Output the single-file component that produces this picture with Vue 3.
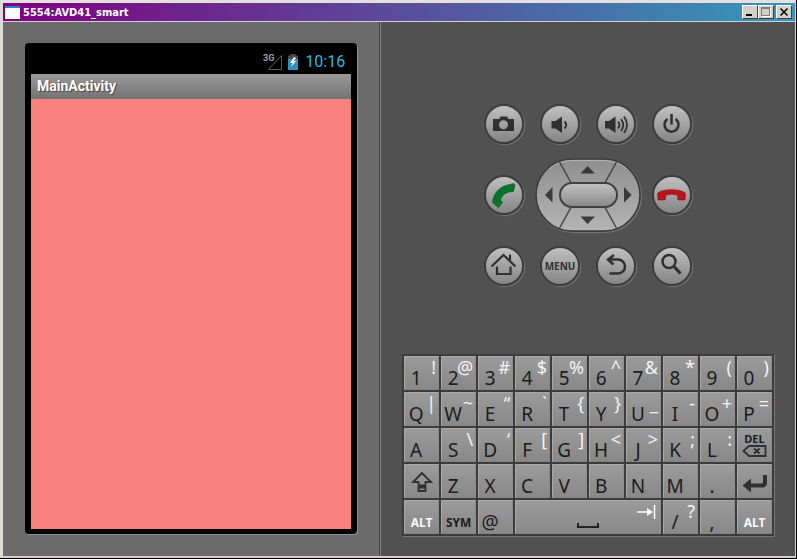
<script setup>
const rows = [
  [['1', '!'], ['2', '@'], ['3', '#'], ['4', '$'], ['5', '%'], ['6', '^'], ['7', '&'], ['8', '*'], ['9', '('], ['0', ')']],
  [['Q', '|'], ['W', '~'], ['E', '“'], ['R', '`'], ['T', '{'], ['Y', '}'], ['U', '_'], ['I', '-'], ['O', '+'], ['P', '=']],
  [['A'], ['S', '\\'], ['D', '‘'], ['F', '['], ['G', ']'], ['H', '<'], ['J', '>'], ['K', ';'], ['L', ':'], ['DEL']],
  [['Shift'], ['Z'], ['X'], ['C'], ['V'], ['B'], ['N'], ['M'], ['.'], ['Enter']],
  [['ALT'], ['SYM'], ['@'], ['Space'], ['/', '?'], [','], ['ALT']]
]
const special = ['DEL', 'Shift', 'Enter', 'Space', 'ALT', 'SYM']
const keys = rows.flat().map(([main, alt], id) => ({ id, main, alt, plain: !special.includes(main) }))
</script>

<template>
  <div class="window">
    <header class="titlebar">
      <svg class="app-icon" viewBox="0 0 15 13" aria-hidden="true">
        <rect width="15" height="13" fill="#fff" />
        <rect width="15" height="2" fill="#2b7fd0" />
      </svg>
      <h1 class="title">5554:AVD41_smart</h1>
      <div class="window-buttons">
        <button class="win-btn" aria-label="Minimize">
          <svg viewBox="0 0 12 10"><path d="M2 7h6v2H2z" /></svg>
        </button>
        <button class="win-btn" aria-label="Maximize" disabled>
          <svg viewBox="0 0 12 10">
            <path d="M2 1h9v9H2z" fill="#fff" />
            <path d="M1 0h9v9H1zM2 2v6h7V2z" fill="#808080" fill-rule="evenodd" />
            <path d="M2 2h7v6H2z" fill="#d4d0c8" />
          </svg>
        </button>
        <button class="win-btn close" aria-label="Close">
          <svg viewBox="0 0 12 10"><path d="M2.500 1.500L9.500 8.500M9.500 1.500L2.500 8.500" stroke="#000" stroke-width="1.500" /></svg>
        </button>
      </div>
    </header>

    <main class="content">
      <section class="device-pane">
        <div class="device">
          <div class="status">
            <svg class="signal" viewBox="0 0 20 18" aria-hidden="true">
              <path d="M18.500 2.500v14H5.500z" fill="none" stroke="#5c5c5c" />
              <text x="0" y="8" class="network">3G</text>
            </svg>
            <svg class="battery" viewBox="0 0 10 16" aria-hidden="true">
              <path d="M0 1.500h2.500V0h5v1.500H10V5H0z" fill="#4a4a4a" />
              <path d="M0 5h10v11H0z" fill="#2f94bd" />
              <path d="M6 3L2 9h2.500L3 13l5-6H5.500L8 4z" fill="#fff" />
            </svg>
            <time class="clock">10:16</time>
          </div>
          <h2 class="appbar">MainActivity</h2>
          <div class="canvas"></div>
        </div>
      </section>

      <section class="control-pane">
        <div class="controls">
          <button class="round" aria-label="Camera">
            <svg viewBox="0 0 40 40">
              <path class="solid" fill-rule="evenodd" d="M9 15h6l1.500-2.500h6.500l1.500 2.500H30V27H9zM19.500 16.200a4.500 4.500 0 1 0 0 9a4.500 4.500 0 0 0 0-9z" />
            </svg>
          </button>
          <button class="round" aria-label="Volume down">
            <svg viewBox="0 0 40 40">
              <path class="solid" d="M11.500 17H15.500L22 12.500V29L15.500 24.500H11.500z" />
              <path class="line" d="M24.500 17.500Q28 21 24.500 24.500" />
            </svg>
          </button>
          <button class="round" aria-label="Volume up">
            <svg viewBox="0 0 40 40">
              <path class="solid" d="M9 17H13L19.500 12.500V29L13 24.500H9z" />
              <path class="line" d="M22 17.500Q25 21 22 24.500M25 15Q29.500 21 25 27M28 12.500Q34 21 28 29" />
            </svg>
          </button>
          <button class="round" aria-label="Power">
            <svg viewBox="0 0 40 40">
              <path class="line thick" d="M15.500 15A7 7 0 1 0 23.500 15M19.500 10V20.500" />
            </svg>
          </button>

          <button class="round" aria-label="Call">
            <svg viewBox="0 0 40 40">
              <path fill="#08752b" stroke="#04551d" stroke-width="0.600" d="M23.500 10L30 8.500L31 10L29.500 16.500L25 17C20 18.500 17.500 21.500 16.500 25L18.500 27.500L14.500 32.500L8.500 27.500C9 19 15 12 23.500 10z" />
            </svg>
          </button>
          <div class="dpad">
            <svg class="dpad-face" viewBox="0 0 106 74" aria-hidden="true">
              <defs>
                <linearGradient id="face" x1="0" y1="0" x2="0" y2="1">
                  <stop offset="0" stop-color="#8f8f8f" />
                  <stop offset="1" stop-color="#b4b4b4" />
                </linearGradient>
                <linearGradient id="pill" x1="0" y1="0" x2="0" y2="1">
                  <stop offset="0" stop-color="#c4c4c4" />
                  <stop offset="1" stop-color="#868686" />
                </linearGradient>
              </defs>
              <rect x="1" y="1" width="104" height="72" rx="36" fill="url(#face)" stroke="#3a3a3a" stroke-width="1.500" />
              <path d="M14 11A35 35 0 0 1 37 2.500H69A35 35 0 0 1 92 11" fill="none" stroke="#b5b5b5" />
              <path d="M24 3L36.500 25.500M82 3L69.500 25.500M24 71L36.500 48.500M82 71L69.500 48.500" stroke="#444" stroke-width="1.500" />
              <rect x="25" y="25" width="57" height="24" rx="12" fill="url(#pill)" stroke="#404040" stroke-width="2" />
              <path d="M45.500 15.500L52.500 8L60 15.500zM45.500 58.500L52.500 66L60 58.500zM17.500 29L10 37L17.500 44.500zM89 29L96.500 37L89 44.500z" fill="#3a3a3a" />
            </svg>
            <button class="pad up" aria-label="Up"></button>
            <button class="pad left" aria-label="Left"></button>
            <button class="pad center" aria-label="Select"></button>
            <button class="pad right" aria-label="Right"></button>
            <button class="pad down" aria-label="Down"></button>
          </div>
          <button class="round" aria-label="End call">
            <svg viewBox="0 0 40 40">
              <path fill="#bb151b" stroke="#8c0c10" stroke-width="0.600" d="M6 25L5.500 18.500C9 13.500 30 13.500 33.500 18.500L33 25H26L25.500 20Q19.500 18.500 14 20L13 25z" />
            </svg>
          </button>

          <button class="round" aria-label="Home">
            <svg viewBox="0 0 40 40">
              <path class="line thin" d="M7.500 20.500L19.500 9L31.500 20.500M26 8.500V14M13 20.500V28H26.500V20.500" />
            </svg>
          </button>
          <button class="round menu">MENU</button>
          <button class="round" aria-label="Back">
            <svg viewBox="0 0 40 40">
              <path class="line thick" d="M18 9L12 13.500L17.500 18.500M12.500 13.500H22A7 7 0 0 1 22 27.500H13.500" />
            </svg>
          </button>
          <button class="round" aria-label="Search">
            <svg viewBox="0 0 40 40">
              <circle class="line thick" cx="17" cy="15.500" r="6.500" />
              <path class="line heavy" d="M22 20.500L28.500 27.500" />
            </svg>
          </button>
        </div>

        <div class="keyboard">
          <button v-for="key in keys" :key="key.id" class="key" :class="{ space: key.main === 'Space' }" :aria-label="key.main">
            <template v-if="key.plain">
              <span class="main">{{ key.main }}</span>
              <span v-if="key.alt" class="alt">{{ key.alt }}</span>
            </template>
            <span v-else-if="key.main === 'ALT' || key.main === 'SYM'" class="word" :class="{ light: key.main === 'ALT' }">{{ key.main }}</span>
            <span v-else-if="key.main === 'DEL'" class="delete">
              DEL
              <svg viewBox="0 0 25 12"><path class="line" d="M1.500 6L7 1H23.500V11H7zM12 3.500L17.500 8.500M17.500 3.500L12 8.500" /></svg>
            </span>
            <svg v-else-if="key.main === 'Shift'" class="glyph" viewBox="0 0 35 34">
              <path class="line" d="M18 9L9 18H14.500V21.500H21.500V18H27zM14.500 23.500H21.500V27H14.500z" />
            </svg>
            <svg v-else-if="key.main === 'Enter'" class="glyph" viewBox="0 0 35 34">
              <path class="solid" d="M5.500 21.500L14 14.500V28.500z" />
              <path class="enter-line" d="M12 21.500H25Q28 21.500 28 18.500V11" />
            </svg>
            <template v-else>
              <svg class="space-mark" viewBox="0 0 22 6"><path d="M1 0V4H21V0" /></svg>
              <svg class="tab-mark" viewBox="0 0 20 14"><path d="M1 7H13M18.500 0V14" /><path class="tip" d="M11 3L17 7L11 11z" /></svg>
            </template>
          </button>
        </div>
      </section>
    </main>
  </div>
</template>

<style>
body {
  margin: 0;
  background: #000;
}
</style>

<style scoped>
* {
  box-sizing: border-box;
}

button {
  margin: 0;
  padding: 0;
  border: 0;
  font: inherit;
}

svg {
  display: block;
}

.window {
  display: flex;
  flex-direction: column;
  min-height: calc(100vh - 1px);
  margin-right: 1px;
  border: 1px solid #d4d0c8;
  border-width: 3px 1px 2px 3px;
  border-left-color: #dedbd7;
  border-top-color: #e4e0e0;
  font-family: "Noto Sans", "Open Sans", sans-serif;
}

.titlebar {
  display: flex;
  align-items: center;
  height: 19px;
  padding: 0 3px 0 2px;
  border-bottom: 1px solid #d4d0d4;
  background: linear-gradient(90deg, #800080, #3399b7);
}

.app-icon {
  width: 15px;
  height: 13px;
}

.title {
  flex: 1;
  margin: 0 0 0 3px;
  padding-top: 1px;
  color: #fff;
  font: bold 11px/18px "DejaVu Sans Condensed", "DejaVu Sans", sans-serif;
}

.window-buttons {
  display: flex;
}

.win-btn {
  display: grid;
  place-items: center;
  width: 16px;
  height: 14px;
  border: 1px solid;
  border-color: #fff #404040 #404040 #fff;
  background: #d4d0c8;
}

.win-btn svg {
  width: 12px;
  height: 10px;
}

.close {
  margin-left: 2px;
}

.content {
  flex: 1;
  display: grid;
  grid-template-columns: 10fr 11fr;
}

.device-pane {
  display: flex;
  padding: 21px 22px 22px;
  border-right: 1px solid #3f3f3f;
  background: #6b6b6b;
}

.device {
  flex: 1;
  display: flex;
  flex-direction: column;
  padding: 0 6px 5px;
  border-radius: 4px;
  background: #000;
  box-shadow: 1px 1px 0 #909090;
}

.status {
  display: flex;
  justify-content: flex-end;
  align-items: center;
  height: 31px;
  padding: 6px 6px 0 0;
}

.signal {
  width: 20px;
  height: 18px;
  margin-right: 5px;
}

.network {
  fill: #a0a0a0;
  font: bold 9px "Roboto", sans-serif;
}

.battery {
  width: 10px;
  height: 16px;
  margin-right: 7px;
}

.clock {
  color: #33b5e5;
  font: 16px/20px "Roboto", sans-serif;
}

.appbar {
  height: 25px;
  margin: 0;
  padding-left: 6px;
  background: linear-gradient(#999, #737373);
  color: #fff;
  font: bold 14px/24px "Roboto", sans-serif;
  text-shadow: 1px 1px 1px #444;
}

.canvas {
  flex: 1;
  background: #f98280;
}

.control-pane {
  display: flex;
  flex-direction: column;
  align-items: center;
  gap: 20px;
  padding: 82px 21px 20px;
  border-left: 1px solid #828282;
  background: #515151;
}

.controls {
  display: grid;
  grid-template-columns: repeat(4, 40px);
  align-items: center;
  gap: 14px 16px;
}

.round {
  width: 40px;
  height: 40px;
  border: 2px solid #3d3d3d;
  border-radius: 50%;
  background: linear-gradient(#c0c0c0, #858585);
  box-shadow: 1px 1px 1px #777;
}

.round svg {
  width: 40px;
  height: 40px;
  margin: -2px;
}

.menu {
  color: #303030;
  font-size: 10px;
  font-weight: bold;
}

.solid {
  fill: #303030;
}

.line {
  fill: none;
  stroke: #303030;
  stroke-width: 1.8;
}

.thin {
  stroke-width: 2.2;
}

.thick {
  stroke-width: 2.5;
}

.heavy {
  stroke-width: 3.2;
}

.dpad {
  grid-column: span 2;
  justify-self: center;
  display: grid;
  grid-template: 25px 24px 25px / 25px 56px 25px;
}

.dpad-face {
  grid-area: 1 / 1 / 4 / 4;
  width: 106px;
  height: 74px;
  border-radius: 37px;
  box-shadow: 1px 1px 1px #777;
}

.pad {
  background: transparent;
}

.up {
  grid-area: 1 / 2;
}

.left {
  grid-area: 2 / 1;
}

.center {
  grid-area: 2 / 2;
}

.right {
  grid-area: 2 / 3;
}

.down {
  grid-area: 3 / 2;
}

.keyboard {
  align-self: stretch;
  display: grid;
  grid-template-columns: repeat(10, 1fr);
  grid-auto-rows: 34px;
  gap: 2px;
  margin-top: auto;
  padding: 2px;
  background: #3c3c3c;
  box-shadow: 1px 1px 0 #777;
}

.key {
  display: grid;
  grid-template-columns: 22px 1fr;
  border: 1px solid #a8a8a8;
  border-right-color: #8c8c8c;
  border-bottom-color: #858585;
  background: linear-gradient(#9b9b9b, #888);
  color: #1c1c1c;
}

.main {
  grid-area: 1 / 1;
  align-self: end;
  text-align: center;
  font-size: 19px;
  line-height: 22px;
}

.alt {
  grid-area: 1 / 1 / 2 / 3;
  align-self: start;
  justify-self: end;
  padding-right: 2px;
  color: #f4f4f4;
  font-size: 18px;
  line-height: 20px;
}

.word {
  grid-area: 1 / 1 / 2 / 3;
  align-self: end;
  text-align: center;
  font-size: 12px;
  font-weight: bold;
  line-height: 20px;
}

.light {
  color: #f8f8f8;
}

.delete {
  grid-column: 1 / 3;
  justify-self: center;
  align-self: center;
  font-size: 11px;
  font-weight: bold;
  line-height: 12px;
}

.delete svg {
  width: 25px;
  height: 12px;
}

.glyph {
  grid-area: 1 / 1 / 2 / 3;
  width: 35px;
  height: 34px;
  margin: -1px;
}

.enter-line {
  fill: none;
  stroke: #303030;
  stroke-width: 4;
}

.space {
  grid-column: span 4;
  grid-template-columns: 1fr;
  padding: 4px 4px;
}

.space-mark {
  grid-area: 1 / 1;
  align-self: end;
  justify-self: center;
  width: 22px;
  height: 6px;
  fill: none;
  stroke: #222;
  stroke-width: 2;
}

.tab-mark {
  grid-area: 1 / 1;
  align-self: start;
  justify-self: end;
  width: 20px;
  height: 14px;
  fill: none;
  stroke: #fff;
  stroke-width: 1.5;
}

.tip {
  fill: #fff;
  stroke: none;
}
</style>
